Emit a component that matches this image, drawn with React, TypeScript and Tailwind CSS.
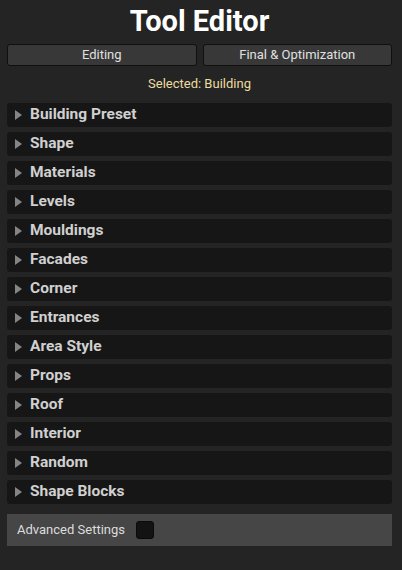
const sections = [
  'Building Preset',
  'Shape',
  'Materials',
  'Levels',
  'Mouldings',
  'Facades',
  'Corner',
  'Entrances',
  'Area Style',
  'Props',
  'Roof',
  'Interior',
  'Random',
  'Shape Blocks',
];

function SectionRow({ label }: { label: string }) {
  return (
    <div className="flex h-[24px] items-center rounded-[3px] bg-[#161616] pl-[8px]">
      <svg width="7" height="10" viewBox="0 0 7 10" className="mr-[8px]">
        <path d="M0 0 L7 5 L0 10 Z" fill="#858585" />
      </svg>
      <span className="text-[15.5px] font-bold text-[#d0d0d0]">{label}</span>
    </div>
  );
}

export default function App() {
  return (
    <div
      className="flex h-[570px] w-[402px] flex-col bg-[#242424] pl-[7px] pr-[10px]"
      style={{ fontFamily: 'Roboto, "Noto Sans", sans-serif' }}
    >
      <h1 className="mt-[2px] h-[38px] text-center text-[29px] font-bold leading-[38px] text-white">
        Tool Editor
      </h1>
      <div className="mt-[4px] flex gap-[6px]">
        <button className="h-[22px] flex-1 rounded-[3px] border border-[#0f0f0f] bg-[#383838] text-[13px] text-[#e0e0e0]">
          Editing
        </button>
        <button className="h-[22px] flex-1 rounded-[3px] border border-[#0f0f0f] bg-[#383838] text-[13px] text-[#e0e0e0]">
          Final &amp; Optimization
        </button>
      </div>
      <div className="mt-[9px] text-center text-[13px] leading-[18px] text-[#ecdca0]">
        Selected: Building
      </div>
      <div className="mt-[10px] flex flex-col gap-[5px]">
        {sections.map((s) => (
          <SectionRow key={s} label={s} />
        ))}
      </div>
      <div className="mt-[10px] flex h-[32px] items-center bg-[#464646] pl-[10px]">
        <span className="text-[13px] text-[#dcdcdc]">Advanced Settings</span>
        <div className="ml-[11px] h-[18px] w-[18px] rounded-[3px] border border-[#0a0a0a] bg-[#131313]" />
      </div>
    </div>
  );
}
